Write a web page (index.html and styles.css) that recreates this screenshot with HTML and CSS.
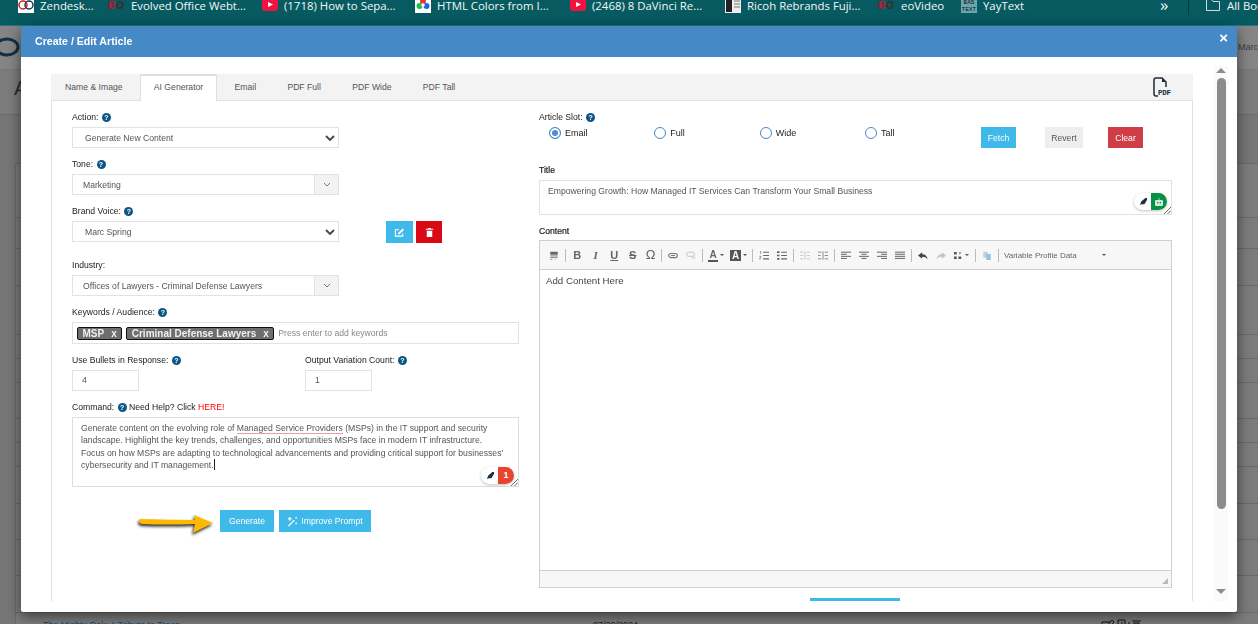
FILE: index.html
```html
<!DOCTYPE html>
<html lang="en">
<head>
<meta charset="utf-8">
<title>Create / Edit Article</title>
<link rel="stylesheet" href="styles.css">
</head>
<body>
<nav class="bookmarks">
  <a class="bm"><svg class="bm-icon" viewBox="0 0 16 16"><rect width="16" height="16" fill="#fff"/><circle cx="5" cy="8" r="4" fill="none" stroke="#c22" stroke-width="1.5"/><circle cx="11" cy="8" r="4" fill="none" stroke="#235" stroke-width="1.5"/></svg>Zendesk...</a>
  <a class="bm"><span class="eo"><b>e</b><i>o</i></span>Evolved Office Webt...</a>
  <a class="bm"><svg class="bm-icon" viewBox="0 0 16 16"><rect y="1" width="16" height="13" rx="3" fill="#f01340"/><path d="M6 5l5 2.500-5 2.500z" fill="#fff"/></svg>(1718) How to Sepa...</a>
  <a class="bm"><svg class="bm-icon" viewBox="0 0 16 16"><rect width="16" height="16" fill="#fff"/><circle cx="8" cy="4.500" r="3" fill="#e33"/><circle cx="4.500" cy="9" r="3" fill="#2b5"/><circle cx="11.500" cy="9" r="3" fill="#26d"/><circle cx="8" cy="8" r="1.800" fill="#fff"/></svg>HTML Colors from I...</a>
  <a class="bm"><svg class="bm-icon" viewBox="0 0 16 16"><rect y="1" width="16" height="13" rx="3" fill="#f01340"/><path d="M6 5l5 2.500-5 2.500z" fill="#fff"/></svg>(2468) 8 DaVinci Re...</a>
  <a class="bm"><svg class="bm-icon" viewBox="0 0 16 16"><rect width="16" height="16" fill="#eee"/><rect x="1" y="1" width="6" height="14" fill="#222"/><path d="M9 4h6M9 7h6M9 10h6" stroke="#777"/></svg>Ricoh Rebrands Fuji...</a>
  <a class="bm"><span class="eo"><b>e</b><i>o</i></span>eoVideo</a>
  <a class="bm"><span class="yay">BAS<br>TEXT</span>YayText</a>
  <span class="bm-more">»</span>
  <span class="bm-sep"></span>
  <a class="bm bm-all"><svg class="bm-icon" viewBox="0 0 16 16"><path d="M1.500 13.500v-11h5l1.500 2h6.500v9z" fill="none" stroke="#cfdcdc"/></svg>All Bookmarks</a>
</nav>

<div class="backdrop">
  <header class="page-head">
    <svg class="page-logo" viewBox="0 0 24 24"><ellipse cx="10" cy="12" rx="11" ry="8" fill="none" stroke="#12304a" stroke-width="3"/></svg>
    <span class="page-user">Marc Spring</span>
  </header>
  <div class="page-sub"><span class="page-title">A</span></div>
  <div class="page-gap"></div>
  <div class="page-rows">
    <div class="page-row"></div><div class="page-row"></div><div class="page-row"></div><div class="page-row"></div>
    <div class="page-row"></div><div class="page-row"></div><div class="page-row"></div><div class="page-row"></div>
    <div class="page-row"></div><div class="page-row"></div><div class="page-row"></div><div class="page-row"></div>
    <div class="page-row"></div>
    <div class="page-row page-row-text">
      <span class="row-link">The Mighty Oak: A Tribute to Trees</span>
      <span class="row-date">07/20/2024</span>
      <span class="row-icons">
        <svg viewBox="0 0 40 12"><path d="M1 12V4h8M5 9l6-7 2 2-6 7zM17 12V2h7v10M21 4v8h7V4M31 3h9M33 12V5h5v7" fill="none" stroke="#111"/></svg>
      </span>
    </div>
  </div>
</div>

<div class="modal">
  <header class="modal-head">
    <h1 class="modal-title">Create / Edit Article</h1>
    <span class="modal-close">×</span>
  </header>
  <div class="modal-body">
    <section class="panel">
      <div class="tabs">
        <span class="tab">Name &amp; Image</span>
        <span class="tab tab-active">AI Generator</span>
        <span class="tab">Email</span>
        <span class="tab">PDF Full</span>
        <span class="tab">PDF Wide</span>
        <span class="tab">PDF Tall</span>
        <span class="tab-pdf">
          <svg class="pdf-page" viewBox="0 0 14 20"><path d="M5 19H3q-2 0-2-2V3q0-2 2-2h6l4 4v5" fill="none" stroke="#1e2a3a" stroke-width="1.500"/><path d="M9 1l4 4H9z" fill="#1e2a3a"/></svg>
          <span class="pdf-word">PDF</span>
        </span>
      </div>
      <div class="panel-grid">
        <div class="col-left">
          <div class="group">
            <label class="label">Action: <span class="help">?</span></label>
            <div class="select"><span class="select-text">Generate New Content</span><svg class="chev" viewBox="0 0 10 6"><path d="M1 1l4 4 4-4" fill="none" stroke="#444" stroke-width="1.800"/></svg></div>
          </div>
          <div class="group">
            <label class="label">Tone: <span class="help">?</span></label>
            <div class="select select-addon"><span class="select-text">Marketing</span><span class="addon"><svg viewBox="0 0 8 5"><path d="M1 1l3 3 3-3" fill="none" stroke="#777"/></svg></span></div>
          </div>
          <div class="group group-brand">
            <label class="label">Brand Voice: <span class="help">?</span></label>
            <div class="brand-row">
              <div class="select"><span class="select-text">Marc Spring</span><svg class="chev" viewBox="0 0 10 6"><path d="M1 1l4 4 4-4" fill="none" stroke="#444" stroke-width="1.800"/></svg></div>
              <button class="icon-btn icon-btn-blue"><svg viewBox="0 0 12 12"><path d="M9.500 7v3h-8V3h4" fill="none" stroke="#fff" stroke-width="1.200"/><path d="M4.500 6.500L9.500 1.500l1.500 1.500-5 5H4.500z" fill="#fff"/></svg></button>
              <button class="icon-btn icon-btn-red"><svg viewBox="0 0 12 12"><path d="M2 2h8v1H2zM3 4h6v7H3zM4.500 1h3v1h-3z" fill="#fff"/></svg></button>
            </div>
          </div>
          <div class="group">
            <label class="label">Industry:</label>
            <div class="select select-addon"><span class="select-text">Offices of Lawyers - Criminal Defense Lawyers</span><span class="addon"><svg viewBox="0 0 8 5"><path d="M1 1l3 3 3-3" fill="none" stroke="#777"/></svg></span></div>
          </div>
          <div class="group">
            <label class="label">Keywords / Audience: <span class="help">?</span></label>
            <div class="tags"><span class="tag">MSP<i>x</i></span><span class="tag">Criminal Defense Lawyers<i>x</i></span><span class="tags-hint">Press enter to add keywords</span></div>
          </div>
          <div class="num-row">
            <div class="group">
              <label class="label">Use Bullets in Response: <span class="help">?</span></label>
              <div class="num">4</div>
            </div>
            <div class="group">
              <label class="label">Output Variation Count: <span class="help">?</span></label>
              <div class="num">1</div>
            </div>
          </div>
          <div class="group group-command">
            <label class="label">Command: <span class="help">?</span> Need Help? Click <a class="here">HERE!</a></label>
            <div class="command">Generate content on the evolving role of <span class="squiggle">Managed Service Providers</span> (MSPs) in the IT support and security<br>landscape. Highlight the key trends, challenges, and opportunities MSPs face in modern IT infrastructure.<br>Focus on how MSPs are adapting to technological advancements and providing critical support for businesses'<br>cybersecurity and IT management.<span class="caret"></span>
              <span class="pill"><svg class="feather" viewBox="0 0 10 10"><path d="M1 9l1.500-4L7 1h2v2L6 8H3z" fill="#1f2f45"/></svg><span class="pill-count">1</span></span>
              <svg class="grip" viewBox="0 0 8 8"><path d="M0 8L8 0M4 8L8 4" stroke="#555"/></svg>
            </div>
          </div>
          <div class="gen-row">
            <svg class="arrow" viewBox="0 0 78 24"><path d="M2 7q-2 2 0 4l2 1q24 1 53 0l-2 9 20-10L56 3l1 5Q30 8 2 7z" fill="#fdb900"/></svg>
            <button class="btn btn-blue btn-gen">Generate</button>
            <button class="btn btn-blue btn-improve"><svg viewBox="0 0 12 12"><path d="M1 10.500L7.500 4l1 1L2 11.500z" fill="#fff"/><path d="M3 1l.5 1.500L5 3l-1.500.5L3 5l-.5-1.500L1 3l1.500-.5zM10 1v2M9 2h2M10 7v2M9 8h2" stroke="#fff" fill="#fff" stroke-width=".8"/></svg>Improve Prompt</button>
          </div>
        </div>

        <div class="col-right">
          <label class="label">Article Slot: <span class="help">?</span></label>
          <div class="slot-row">
            <span class="radio-item"><span class="radio radio-on"></span>Email</span>
            <span class="radio-item"><span class="radio"></span>Full</span>
            <span class="radio-item"><span class="radio"></span>Wide</span>
            <span class="radio-item radio-item-last"><span class="radio"></span>Tall</span>
            <button class="btn btn-blue btn-fetch">Fetch</button>
            <button class="btn btn-grey btn-revert">Revert</button>
            <button class="btn btn-red btn-clear">Clear</button>
          </div>
          <label class="label label-strong label-title">Title</label>
          <div class="title-box">Empowering Growth: How Managed IT Services Can Transform Your Small Business
            <span class="pill"><svg class="feather" viewBox="0 0 10 10"><path d="M1 9l1.500-4L7 1h2v2L6 8H3z" fill="#1f2f45"/></svg><span class="pill-bot"><svg viewBox="0 0 10 8"><rect x="1" y="2" width="8" height="6" rx="1" fill="#cdeedd"/><rect x="3" y="4" width="1.300" height="1.300" fill="#0a8f47"/><rect x="5.700" y="4" width="1.300" height="1.300" fill="#0a8f47"/><rect x="4.600" y="0" width=".8" height="2" fill="#cdeedd"/></svg></span></span>
            <svg class="grip" viewBox="0 0 8 8"><path d="M0 8L8 0M4 8L8 4" stroke="#555"/></svg>
          </div>
          <label class="label label-strong label-content">Content</label>
          <div class="editor">
            <div class="toolbar">
              <span class="tb"><svg viewBox="0 0 12 12"><path d="M1 1h10v4H1z" fill="#666"/><path d="M1 6.500h10M1 8.500h10M1 11h3M7 11h1" stroke="#666"/></svg></span>
              <span class="tb-sep"></span>
              <span class="tb tb-text tb-b">B</span>
              <span class="tb tb-text tb-i">I</span>
              <span class="tb tb-text tb-u">U</span>
              <span class="tb tb-text tb-s">S</span>
              <span class="tb tb-text tb-o">Ω</span>
              <span class="tb-sep"></span>
              <span class="tb"><svg viewBox="0 0 12 8"><rect x=".8" y="1.500" width="10.400" height="5" rx="2.500" fill="none" stroke="#777" stroke-width="1.300"/><path d="M3.500 4h5" stroke="#777" stroke-width="1.300"/></svg></span>
              <span class="tb"><svg viewBox="0 0 12 10"><rect x=".8" y="1" width="9" height="5" rx="2" fill="none" stroke="#c4c4c4" stroke-width="1.200"/><path d="M7 6l4 3M11 6L7 9" stroke="#c4c4c4"/></svg></span>
              <span class="tb-sep"></span>
              <span class="tb tb-color"><span class="tb-a">A</span><i class="tb-caret"></i></span>
              <span class="tb tb-color tb-color-fill"><span class="tb-a tb-a-fill">A</span><i class="tb-caret"></i></span>
              <span class="tb-sep"></span>
              <span class="tb"><svg viewBox="0 0 12 10"><path d="M5 1h7M5 5h7M5 9h7" stroke="#666" stroke-width="1.300"/><path d="M1 0h1v3M.5 6h2L.5 9h2" fill="none" stroke="#666" stroke-width=".8"/></svg></span>
              <span class="tb"><svg viewBox="0 0 12 10"><path d="M5 1h7M5 5h7M5 9h7" stroke="#666" stroke-width="1.300"/><path d="M0 0h3v2H0zM0 4h3v2H0zM0 8h3v2H0z" fill="#666"/></svg></span>
              <span class="tb-sep"></span>
              <span class="tb"><svg viewBox="0 0 12 10"><path d="M0 1h4M0 5h4M0 9h4M8 1h4M8 5h4M8 9h4M6 0v10" stroke="#c4c4c4"/></svg></span>
              <span class="tb"><svg viewBox="0 0 12 10"><path d="M0 1h4M0 5h3M0 9h4M8 1h4M8 5h4M8 9h4M6 0v10" stroke="#777"/></svg></span>
              <span class="tb-sep"></span>
              <span class="tb"><svg viewBox="0 0 12 10"><path d="M0 1h12M0 3.500h7M0 6h12M0 8.500h7" stroke="#666" stroke-width="1.200"/></svg></span>
              <span class="tb"><svg viewBox="0 0 12 10"><path d="M0 1h12M3 3.500h6M0 6h12M3 8.500h6" stroke="#666" stroke-width="1.200"/></svg></span>
              <span class="tb"><svg viewBox="0 0 12 10"><path d="M0 1h12M5 3.500h7M0 6h12M5 8.500h7" stroke="#666" stroke-width="1.200"/></svg></span>
              <span class="tb"><svg viewBox="0 0 12 10"><path d="M0 1h12M0 3.500h12M0 6h12M0 8.500h12" stroke="#666" stroke-width="1.200"/></svg></span>
              <span class="tb-sep"></span>
              <span class="tb"><svg viewBox="0 0 12 10"><path d="M5 1L0 5l5 4V6.500c3 0 5 1 6.500 3C11 6 9 3.500 5 3.500z" fill="#444"/></svg></span>
              <span class="tb"><svg viewBox="0 0 12 10"><path d="M7 1l5 4-5 4V6.500c-3 0-5 1-6.500 3C1 6 3 3.500 7 3.500z" fill="#c4c4c4"/></svg></span>
              <span class="tb tb-tools"><svg viewBox="0 0 10 10"><path d="M0 1h3v3H0zM5 6h3v3H5zM0 6h3v3H0zM6 1l2 1-2 2z" fill="#555"/></svg><i class="tb-caret"></i></span>
              <span class="tb-sep"></span>
              <span class="tb"><svg viewBox="0 0 12 12"><path d="M1 1h6v8H1z" fill="#ccc"/><path d="M5 4h6v8H5z" fill="#8ec5e6"/></svg></span>
              <span class="tb-sep"></span>
              <span class="tb-select">Variable Profile Data<i class="tb-caret"></i></span>
            </div>
            <div class="editor-body">Add Content Here</div>
            <div class="editor-status"><svg viewBox="0 0 6 6"><path d="M6 0v6H0z" fill="#bbb"/></svg></div>
          </div>
          <div class="progress"></div>
        </div>
      </div>
    </section>
    <aside class="scrollbar">
      <span class="sb-up"></span>
      <span class="sb-thumb"></span>
      <span class="sb-down"></span>
    </aside>
  </div>
</div>
</body>
</html>
```
FILE: styles.css
```css
* { box-sizing: border-box; }
html, body { margin: 0; height: 624px; overflow: hidden; }
body { background: #767676; font-family: "Liberation Sans", Arial, sans-serif; font-size: 8.650px; color: #222; }

/* bookmarks */
.bookmarks { height: 26px; background: #065a60; border-bottom: 1px solid #1f7b80; display: grid; grid-template-columns: 90px 154px 153px 155px 155px 153px 83px 199px 28px 1px 70px; align-items: start; padding-left: 18px; overflow: hidden; color: #f2f7f7; font-family: "Open Sans", sans-serif; font-size: 11.400px; line-height: 11px; white-space: nowrap; }
.bm { display: flex; align-items: flex-start; gap: 6px; }
.bm-icon { width: 16px; height: 16px; margin-top: -3px; flex: none; }
.eo { width: 17px; margin-top: -1px; font: 700 14px/11px "Liberation Sans", sans-serif; }
.eo b { color: #c8102e; }
.eo i { color: #333; font-style: normal; }
.yay { width: 16px; height: 13px; background: #6aa7ac; color: #111; font: 6px/6.500px "Liberation Mono", monospace; text-align: center; overflow: hidden; }
.bm-more { font-size: 17px; line-height: 9px; }
.bm-sep { width: 1px; height: 15px; background: #02373b; }
.bm-all { margin-left: 16px; }

/* page behind the dialog */
.backdrop { height: 598px; }
.page-head { height: 44px; background: #858585; border-bottom: 1px solid #777; display: flex; justify-content: space-between; align-items: center; }
.page-logo { width: 24px; height: 24px; margin-left: -3px; margin-top: -2px; }
.page-user { color: #3c3c3c; font-size: 9px; margin-top: -2px; margin-right: -40px; width: 60px; white-space: nowrap; }
.page-sub { height: 45px; background: #7c7c7c; border-bottom: 1px solid #6c6c6c; padding-left: 14px; }
.page-title { font-size: 20px; line-height: 36px; color: #2a2a2a; }
.page-gap { height: 48px; }
.page-rows { margin-left: 15px; border-left: 1px solid #6a6a6a; border-top: 1px solid #6a6a6a; display: grid; grid-template-rows: 54px 31px 37px 49px 24px 24px 36px 24px 24px 37px 36px 36px 37px 12px; background: #7c7c7c; }
.page-row { border-bottom: 1px solid #6a6a6a; }
.page-row-text { border-bottom: 0; font-size: 9px; line-height: 10px; padding: 7px 0 0 27px; display: flex; overflow: hidden; }
.row-link { width: 550px; text-decoration: underline; color: #13486e; font-size: 8.900px; }
.row-date { width: 508px; color: #222; }
.row-icons svg { width: 40px; height: 12px; display: block; margin-top: -2px; }

/* dialog */
.modal { position: fixed; left: 21px; top: 26px; width: 1216px; height: 586px; background: #fff; border-radius: 2px; box-shadow: 0 4px 14px rgba(0,0,0,.55); display: flex; flex-direction: column; }
.modal-head { height: 31px; flex: none; background: #4589c6; color: #fff; display: flex; align-items: center; justify-content: space-between; padding: 0 9px 2px 14px; }
.modal-title { margin: 0; font-size: 10.600px; font-weight: 700; }
.modal-close { font-size: 15px; font-weight: 700; line-height: 24px; margin-top: -6px; }
.modal-body { flex: 1; display: flex; padding: 9px 9px 11px 30px; min-height: 0; }

/* tab panel */
.panel { width: 1142px; flex: none; border-left: 1px solid #e0e0e0; border-right: 1px solid #e0e0e0; margin-top: 8px; display: flex; flex-direction: column; }
.tabs { height: 27px; flex: none; background: #f3f3f3; border-bottom: 1px solid #e0e0e0; display: flex; gap: 3.300px; margin-left: -1px; margin-right: -1px; position: relative; }
.tab { height: 26px; padding: 0 14px; line-height: 26px; color: #555; white-space: nowrap; }
.tab-active { height: 27px; background: #fff; border: 1px solid #e0e0e0; border-bottom: 0; padding: 0 13px; border-top-width: 2px; line-height: 22px; }
.tab-pdf { position: absolute; right: 20px; top: 3px; width: 20px; height: 20px; }
.pdf-page { width: 14px; height: 20px; display: block; }
.pdf-word { position: absolute; left: 5px; top: 12px; font: 700 7.500px/8px "Liberation Mono", monospace; color: #1e2a3a; letter-spacing: -.2px; }

.panel-grid { display: grid; grid-template-columns: 447px 633px; gap: 20px; padding: 10px 0 0 20px; flex: 1; min-height: 0; }

.group { margin-bottom: 10px; }
.group-brand { margin-bottom: 17px; }
.label { display: block; height: 16px; line-height: 12px; color: #222; white-space: nowrap; }
.help { display: inline-block; width: 9px; height: 9px; border-radius: 50%; background: #0c5588; color: #fff; font: 700 7px/9px "Liberation Sans", sans-serif; text-align: center; margin-left: 1px; }
.here { color: #f00; }
.select { width: 267px; height: 21px; flex: none; border: 1px solid #e2e2e2; background: #fff; display: flex; align-items: center; justify-content: space-between; color: #555; padding: 0 3px 0 12px; }
.chev { width: 10px; height: 6px; margin-top: 1px; }
.select-addon { padding: 0 0 0 10px; }
.addon { width: 24px; height: 19px; background: #f3f3f3; border-left: 1px solid #e2e2e2; display: flex; align-items: center; justify-content: center; }
.addon svg { width: 8px; height: 5px; }
.brand-row { display: flex; height: 21px; align-items: flex-start; }
.icon-btn { width: 27px; height: 22px; flex: none; border: 0; padding: 0; display: flex; align-items: center; justify-content: center; }
.icon-btn svg { width: 11px; height: 11px; }
.icon-btn-blue { background: #3fb9e9; margin-left: 47px; }
.icon-btn-red { background: #d80b14; margin-left: 3px; width: 26px; }
.tags { height: 22px; border: 1px solid #e2e2e2; display: flex; align-items: center; gap: 4px; padding: 0 4px; }
.tag { height: 13px; background: #6e6e6e; border: 1px solid #111; border-radius: 2px; color: #f1f1f1; font-size: 10px; font-weight: 700; line-height: 11px; padding: 0 4.500px; white-space: nowrap; display: flex; }
.tag i { font-style: normal; margin-left: 7px; }
.tags-hint { color: #888; }
.num-row { display: grid; grid-template-columns: 233px 1fr; }
.num { width: 67px; height: 21px; border: 1px solid #e2e2e2; color: #555; line-height: 19px; padding-left: 9px; }
.command { position: relative; height: 70px; border: 1px solid #d8e2d2; padding: 4px 8px; color: #555; line-height: 12.300px; white-space: nowrap; }
.group-command { margin-bottom: 23px; }
.squiggle { border-bottom: 1px solid #e8a0a0; }
.caret { display: inline-block; width: 1px; height: 11px; background: #222; vertical-align: -2px; }
.pill { position: absolute; right: 4px; bottom: 2px; height: 17px; width: 33px; border-radius: 9px; background: #fff; box-shadow: 0 1px 3px rgba(0,0,0,.25); display: flex; align-items: center; overflow: hidden; }
.feather { width: 9px; height: 9px; margin-left: 5px; flex: none; }
.pill-count { margin-left: auto; width: 16px; height: 17px; background: #e8432f; color: #fff; font: 700 9px/17px "Liberation Sans", sans-serif; text-align: center; }
.pill-bot { margin-left: auto; width: 16px; height: 17px; background: #0a8f47; display: flex; align-items: center; justify-content: center; }
.pill-bot svg { width: 10px; height: 8px; }
.grip { position: absolute; right: 0; bottom: 0; width: 7px; height: 7px; }
.gen-row { display: flex; align-items: flex-start; margin-left: 66px; }
.arrow { width: 78px; height: 24px; margin: 2px 4px 0 0; filter: drop-shadow(-1px 2px 1.500px rgba(0,0,0,.85)); flex: none; }
.btn { height: 22px; border: 0; padding: 0; color: #fff; font: 8.650px "Liberation Sans", sans-serif; display: flex; align-items: center; justify-content: center; }
.btn-blue { background: #3fb9e9; }
.btn-grey { background: #eee; color: #555; }
.btn-red { background: #cf3d47; }
.btn-gen { width: 54px; }
.btn-improve { width: 92px; margin-left: 5px; gap: 3px; }
.btn-improve svg { width: 11px; height: 11px; }

.slot-row { display: flex; align-items: flex-start; padding-left: 10px; margin-bottom: 16px; }
.radio-item { width: 105.330px; height: 21px; display: flex; align-items: flex-start; gap: 4px; font-size: 9px; line-height: 12px; color: #222; }
.radio-item-last { width: 116px; }
.radio { width: 12px; height: 12px; border: 1px solid #4589c6; border-radius: 50%; background: #fff; flex: none; }
.radio-on { background: #4a8fd0; box-shadow: inset 0 0 0 2px #fff; }
.btn-fetch { width: 35px; }
.btn-revert { width: 38px; margin-left: 29px; }
.btn-clear { width: 35px; margin-left: 25px; }
.btn-fetch, .btn-revert, .btn-clear { height: 21px; }
.label-strong { color: #222; -webkit-text-stroke: .2px #222; }
.title-box { position: relative; height: 35px; border: 1px solid #e2e2e2; padding: 4px 8px; color: #555; line-height: 12px; margin-bottom: 10px; }
.title-box .pill { right: 4px; bottom: 4px; }
.label-content { height: 15px; }
.editor { height: 348px; border: 1px solid #d0d0d0; display: flex; flex-direction: column; }
.toolbar { height: 29px; flex: none; background: #f7f7f7; border-bottom: 1px solid #d0d0d0; display: flex; align-items: center; padding-left: 5px; }
.tb { width: 18px; height: 14px; display: flex; align-items: center; justify-content: center; flex: none; color: #666; }
.tb svg { width: 10px; height: 9px; }
.tb-text { width: 18.500px; font: 700 11px/14px "Liberation Sans", sans-serif; }
.tb-i { font-style: italic; font-family: "Liberation Serif", serif; }
.tb-u { text-decoration: underline; }
.tb-s { text-decoration: line-through; }
.tb-o { width: 17px; font-weight: 400; font-size: 13px; }
.tb-sep { width: 1px; height: 13px; background: #bbb; margin: 0 2px; flex: none; }
.tb-color { width: 22px; gap: 2px; }
.tb-color-fill { width: 23px; }
.tb-a { font: 700 10px/11px "Liberation Sans", sans-serif; border-bottom: 2px solid #555; padding: 0 1px; }
.tb-a-fill { background: #555; color: #f7f7f7; border: 0; padding: 0 2px; }
.tb-caret { width: 0; height: 0; border: 2px solid transparent; border-top: 2px solid #555; border-bottom: 0; flex: none; }
.tb-tools { width: 23px; gap: 2px; }
.tb-tools svg { width: 9px; height: 9px; }
.tb-select { width: 105px; margin-left: 3px; display: flex; align-items: center; justify-content: space-between; padding-right: 3px; color: #666; font-size: 8px; }
.editor-body { flex: 1; padding: 5px 6px; color: #444; font-size: 9.700px; line-height: 12px; }
.editor-status { height: 17px; flex: none; background: #f7f7f7; border-top: 1px solid #d0d0d0; display: flex; justify-content: flex-end; align-items: flex-end; padding: 0 3px 3px 0; }
.editor-status svg { width: 6px; height: 6px; }
.progress { width: 90px; height: 3px; background: #3fb9e9; margin: 10px 0 0 271px; }

.scrollbar { width: 15px; margin-left: 21px; background: #fafafa; display: flex; flex-direction: column; align-items: center; padding: 2px 0 7px; }
.sb-up, .sb-down { width: 0; height: 0; border: 5px solid transparent; flex: none; }
.sb-up { border-top: 0; border-bottom: 5px solid #8c8c8c; }
.sb-down { border-bottom: 0; border-top: 5px solid #8c8c8c; margin-top: auto; }
.sb-thumb { width: 9px; height: 431px; background: #8c8c8c; border-radius: 5px; margin-top: 5px; }
```
